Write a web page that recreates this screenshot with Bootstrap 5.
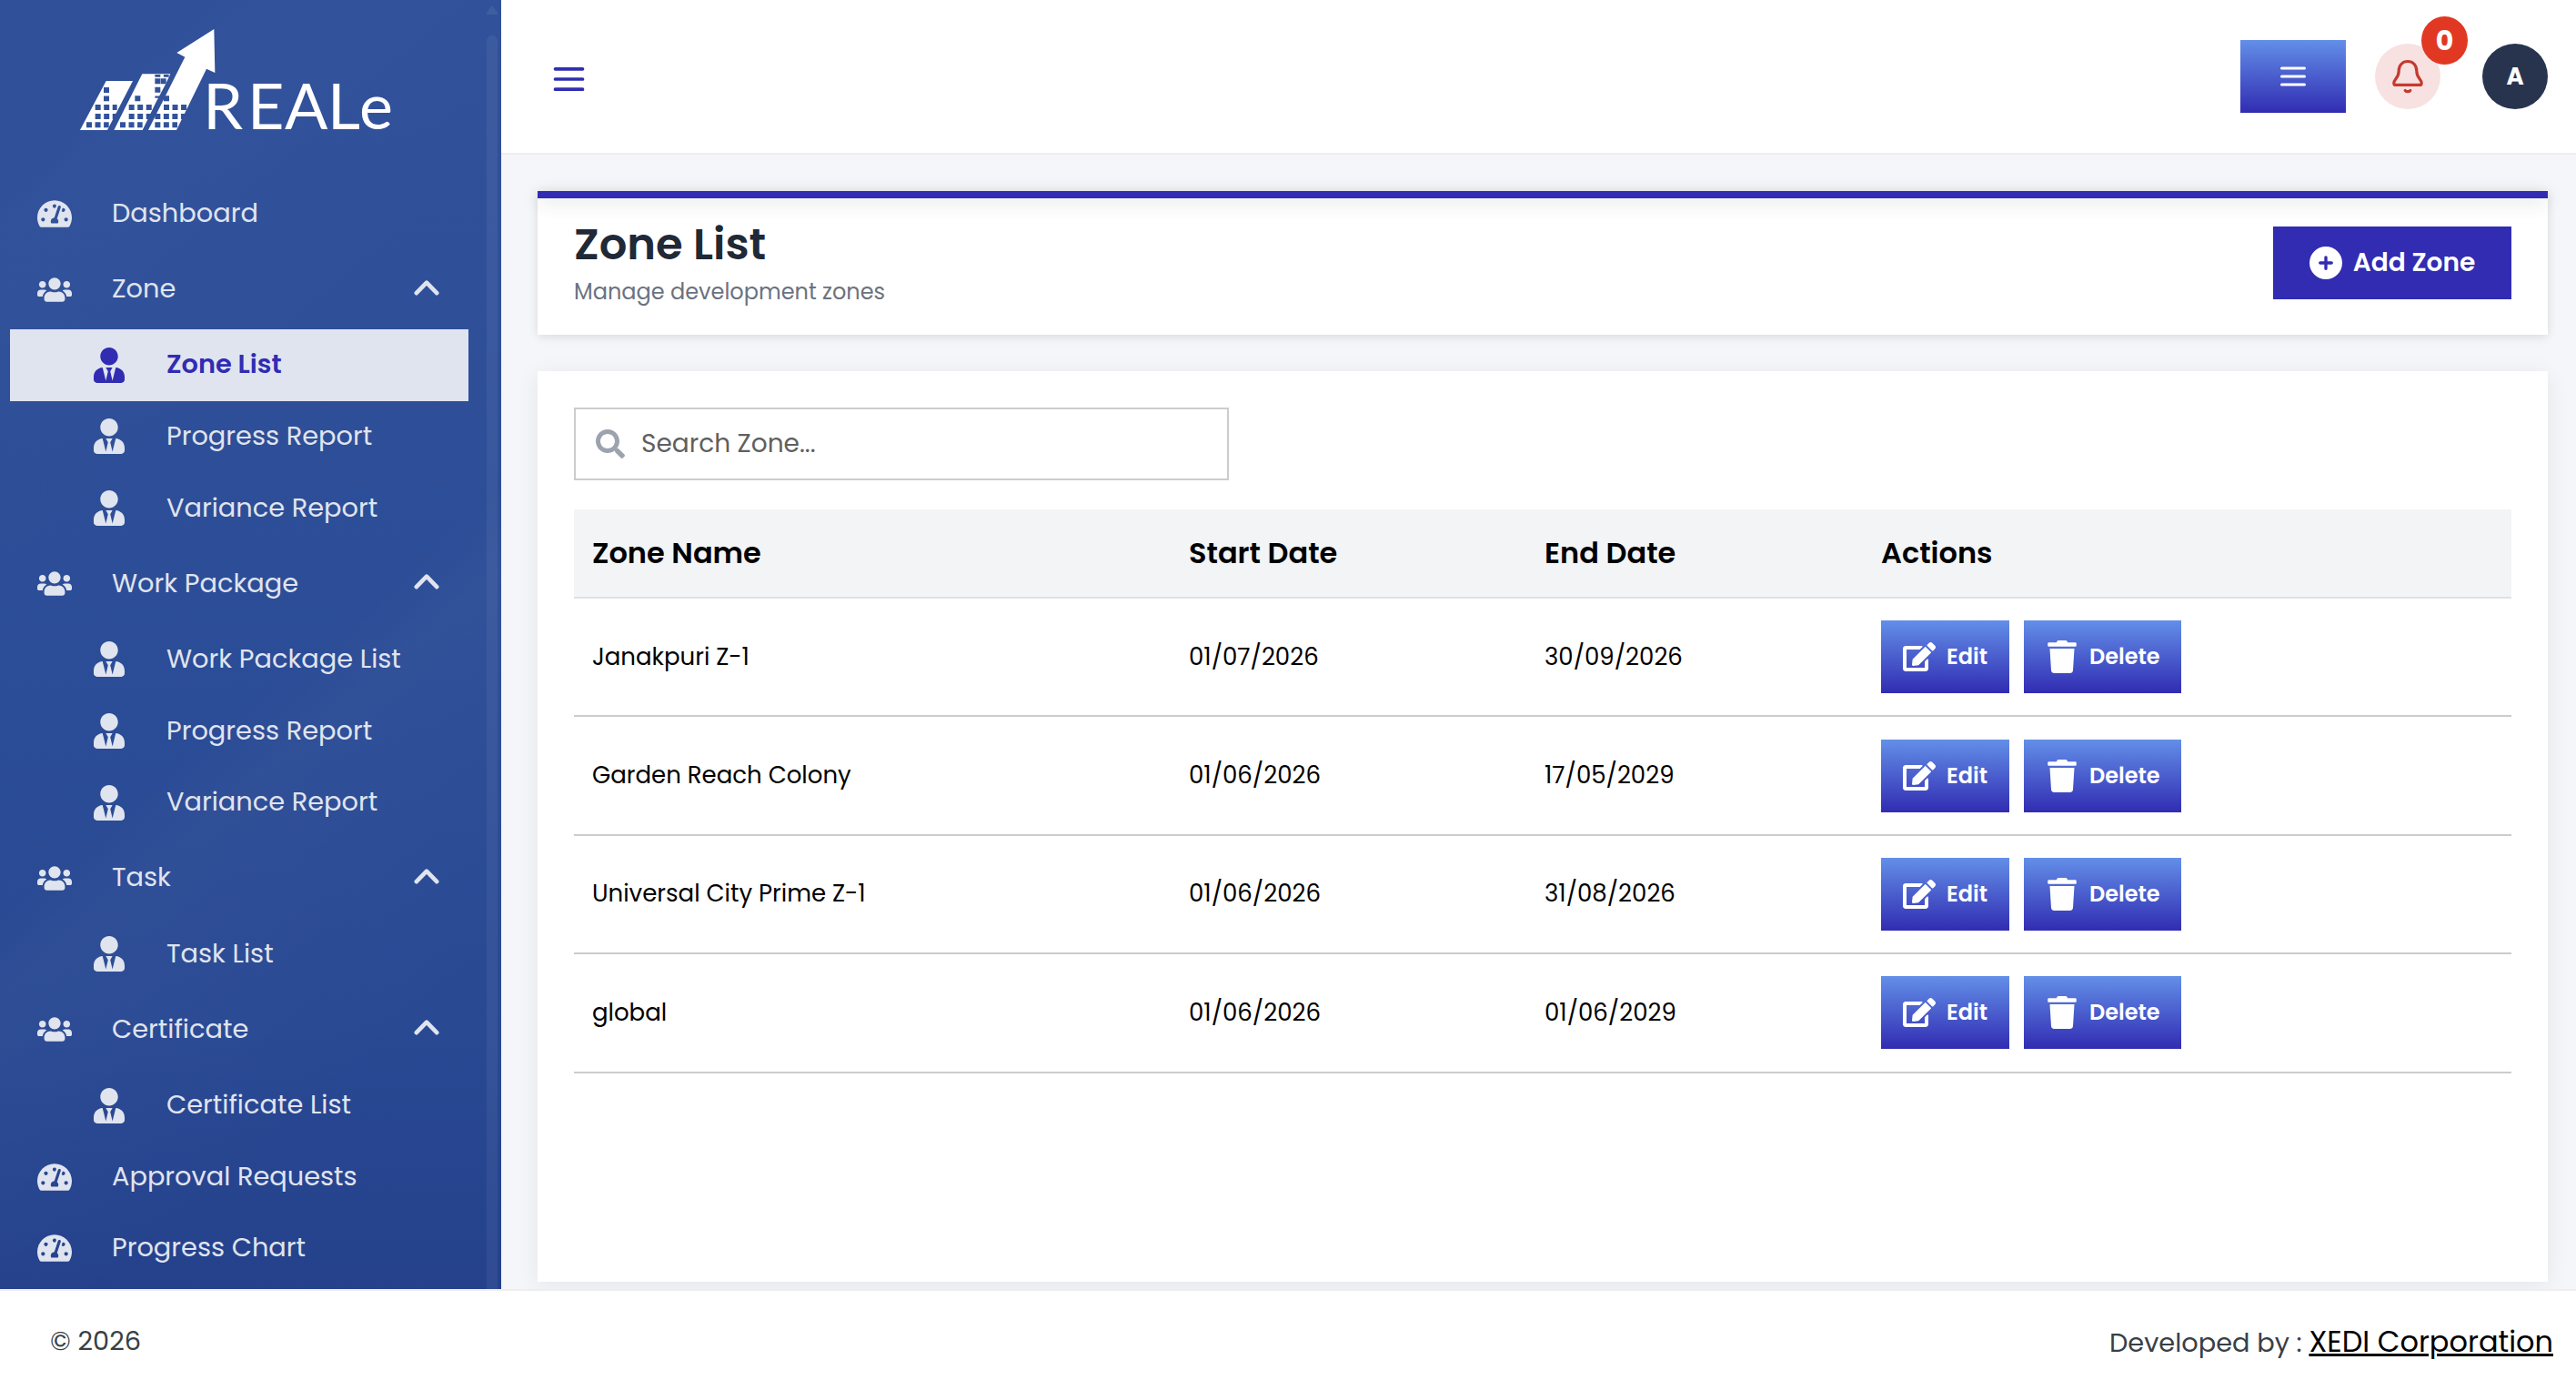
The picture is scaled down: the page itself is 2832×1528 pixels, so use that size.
<!DOCTYPE html>
<html lang="en">
<head>
    <meta charset="UTF-8">
    <meta name="viewport" content="width=device-width, initial-scale=1.0">
    <title>Zone List</title>
    <link rel="stylesheet" href="https://cdn.jsdelivr.net/npm/bootstrap@5.3.0/dist/css/bootstrap.min.css">
    <style>
        :root {
            --brand: #312cb2;
        }

        body {
            height: 1528px;
            font-family: "Poppins", "Inter", sans-serif;
            font-size: 28.8px;
            line-height: 1.5;
            background: #f5f6fa;
        }

        svg { display: block; flex: none; }

        /* sidebar */
        .side-panel {
            width: 551px;
            height: 1417px;
            color: #e0e4ef;
            background:
                linear-gradient(139.5deg, transparent 10%, rgba(255, 255, 255, .012) 14%, transparent 38%, transparent 53%, rgba(255, 255, 255, .025) 58%, transparent 82%),
                linear-gradient(180deg, #30519a 0%, #2f5099 25%, #2b4c96 55%, #294993 80%, #25418c 100%);
        }
        .side-logo { margin: 25px 0 41px 80px; overflow: visible; }
        .side-scroll { width: 12px; margin-right: 4px; padding-top: 6px; gap: 23px; }
        .side-thumb { background: rgba(255, 255, 255, .055); border-radius: 6px 6px 0 0; }
        .side-menu { width: 504px; margin-left: 11px; }
        .side-item { height: 78.7px; padding-left: 30px; color: inherit; text-decoration: none; }
        .side-item > svg { width: 38px; margin: -1px 44px 0 0; }
        .side-item > span { padding-bottom: 2px; }
        .side-head { height: 87.7px; }
        .side-head > .side-chevron { width: 28px; margin: -6px 32px 0 auto; }
        .side-sub { padding-left: 92px; }
        .side-sub > svg { width: 34px; margin-right: 46px; }
        .side-item.active { background: #e0e4ef; color: var(--brand); font-weight: 600; }

        /* top bar */
        .main-col { height: 1417px; }
        .top-bar { height: 170px; padding: 0 31px 0 57px; background: #fff; border-bottom: 2px solid #eee; }
        .top-toggle { margin-top: 6px; }
        .btn-fade {
            height: 80px;
            border: 0;
            border-radius: 0;
            color: #fff;
            background: linear-gradient(180deg, #638fe8, #312cb2);
        }
        .top-menu { width: 116px; }
        .round-box { width: 72px; height: 72px; }
        .bell-box { margin: 0 46px 0 32px; background: #f7e2e1; color: #c43a30; }
        .bell-count {
            left: 51px;
            top: -30px;
            width: 51px;
            height: 53px;
            background: #e13823;
            font-size: 30px;
            font-weight: 700;
        }
        .user-box { background: #28344e; font-size: 26px; font-weight: 700; }

        /* page content */
        .page-body { padding: 40px 31px 8px 40px; gap: 40px; }
        .title-card { height: 158px; background: #fff; box-shadow: 0 2px 10px rgba(0, 0, 0, .12); }
        .title-line { height: 8px; background: var(--brand); box-shadow: 0 4px 20px rgba(0, 50, 30, .16); }
        .title-row { padding: 0 40px; }
        .page-title { font-size: 48px; font-weight: 600; line-height: 60px; color: #1f2937; margin-top: 21px; }
        .page-note { font-size: 24px; line-height: 36px; color: #6b7280; margin-top: 4px; }
        .btn-add { width: 262px; height: 80px; margin-top: 31px; gap: 12px; border-radius: 0; background: var(--brand); color: #fff; font-size: 28px; font-weight: 600; }
        .list-card { padding: 40px; background: #fff; box-shadow: 0 4px 24px rgba(0, 0, 0, .07); }
        .search-box { width: 720px; height: 80px; padding-left: 22px; gap: 18px; border: 2px solid #ccc; color: #5f5f5f; font-size: 28px; }

        .zone-table { width: 2130px; margin-top: 32px; table-layout: fixed; border-collapse: separate; border-spacing: 0; color: #000; }
        .zone-table th { height: 98px; padding: 0 20px; background: #f2f4f6; border-bottom: 2px solid #dee2e6; font-size: 32px; font-weight: 600; vertical-align: middle; }
        .zone-table td { height: 130.4px; padding: 0 20px; border-bottom: 2px solid #ccc; font-size: 26px; vertical-align: middle; }
        .btn-row { font-size: 24px; font-weight: 600; gap: 12px; padding: 0 24px; }
        .btn-edit { width: 141px; }
        .btn-del { width: 173px; gap: 14px; padding-left: 26px; }

        .foot-bar { height: 111px; padding: 2px 25px 0 55px; background: #fff; border-top: 2px solid #eee; color: #3a3f45; }
        .foot-dev { padding-top: 1px; }
        .foot-link { font-size: 32px; color: #000; }
    </style>
</head>
<body class="overflow-hidden">
    <svg width="0" height="0" class="position-absolute">
        <symbol id="i-gauge" viewBox="0 32 576 448"><path fill="currentColor" d="M288 32C128.94 32 0 160.94 0 320c0 52.8 14.25 102.26 39.06 144.8 5.61 9.62 16.3 15.2 27.44 15.2h443c11.14 0 21.83-5.58 27.44-15.2C561.75 422.26 576 372.8 576 320c0-159.06-128.94-288-288-288zm0 64c14.71 0 26.58 10.13 30.32 23.65-1.11 2.26-2.64 4.23-3.45 6.67l-9.22 27.67c-5.13 3.49-10.97 6.01-17.64 6.01-17.67 0-32-14.33-32-32S270.33 96 288 96zM96 384c-17.67 0-32-14.33-32-32s14.33-32 32-32 32 14.33 32 32-14.33 32-32 32zm48-160c-17.67 0-32-14.33-32-32s14.33-32 32-32 32 14.33 32 32-14.33 32-32 32zm246.77-72.41l-61.33 184C343.13 347.33 352 364.54 352 384c0 11.72-3.38 22.55-8.88 32H232.88c-5.5-9.45-8.88-20.28-8.88-32 0-33.94 26.5-61.43 59.9-63.59l61.34-184.01c4.17-12.56 17.73-19.45 30.36-15.17 12.57 4.19 19.35 17.79 15.17 30.36zm14.66 57.2l15.52-46.55c3.47-1.29 7.13-2.23 11.05-2.23 17.67 0 32 14.33 32 32s-14.33 32-32 32c-11.38-.01-20.89-6.28-26.57-15.22zM480 384c-17.67 0-32-14.33-32-32s14.33-32 32-32 32 14.33 32 32-14.33 32-32 32z"/></symbol>
        <symbol id="i-users" viewBox="0 32 640 448"><path fill="currentColor" d="M96 224c35.3 0 64-28.7 64-64s-28.7-64-64-64-64 28.7-64 64 28.7 64 64 64zm448 0c35.3 0 64-28.7 64-64s-28.7-64-64-64-64 28.7-64 64 28.7 64 64 64zm32 32h-64c-17.6 0-33.5 7.1-45.1 18.6 40.3 22.1 68.9 62 75.1 109.4h66c17.7 0 32-14.3 32-32v-32c0-35.3-28.7-64-64-64zm-256 0c61.9 0 112-50.1 112-112S381.9 32 320 32 208 82.1 208 144s50.1 112 112 112zm76.8 32h-8.3c-20.8 10-43.9 16-68.5 16s-47.6-6-68.5-16h-8.3C179.6 288 128 339.6 128 403.2V432c0 26.5 21.5 48 48 48h288c26.5 0 48-21.5 48-48v-28.8c0-63.6-51.6-115.2-115.2-115.2zm-223.7-13.4C161.5 263.1 145.6 256 128 256H64c-35.3 0-64 28.7-64 64v32c0 17.7 14.3 32 32 32h65.9c6.3-47.4 34.9-87.3 75.2-109.4z"/></symbol>
        <symbol id="i-tie" viewBox="0 0 448 512"><path fill="currentColor" d="M224 256c70.7 0 128-57.3 128-128S294.7 0 224 0 96 57.3 96 128s57.3 128 128 128zm95.8 32.6L272 480l-32-136 32-56h-96l32 56-32 136-47.8-191.4C56.9 292 0 350.3 0 422.4V464c0 26.5 21.5 48 48 48h352c26.5 0 48-21.5 48-48v-41.6c0-72.1-56.9-130.4-128.2-133.8z"/></symbol>
        <symbol id="i-up" viewBox="0 0 28 18"><path fill="none" stroke="currentColor" stroke-width="4.6" stroke-linecap="round" stroke-linejoin="round" d="M2.8 15.2 14 3.6l11.2 11.6"/></symbol>
        <symbol id="i-edit" viewBox="0 0 576 512"><path fill="currentColor" d="M402.6 83.2l90.2 90.2c3.8 3.8 3.8 10 0 13.8L274.4 405.6l-92.8 10.3c-12.4 1.4-22.9-9.1-21.5-21.5l10.3-92.8L388.8 83.2c3.8-3.8 10-3.8 13.8 0zm162-22.9l-48.8-48.8c-15.2-15.2-39.9-15.2-55.2 0l-35.4 35.4c-3.8 3.8-3.8 10 0 13.8l90.2 90.2c3.8 3.8 10 3.8 13.8 0l35.4-35.4c15.2-15.3 15.2-40 0-55.2zM384 346.2V448H64V128h229.8c3.2 0 6.2-1.3 8.5-3.5l40-40c7.6-7.6 2.2-20.5-8.5-20.5H48C21.5 64 0 85.5 0 112v352c0 26.5 21.5 48 48 48h352c26.5 0 48-21.5 48-48V306.2c0-10.7-12.9-16-20.5-8.5l-40 40c-2.2 2.3-3.5 5.3-3.5 8.5z"/></symbol>
        <symbol id="i-trash" viewBox="0 0 448 512"><path fill="currentColor" d="M432 32H312l-9.4-18.7A24 24 0 0 0 281.1 0H166.8a23.72 23.72 0 0 0-21.4 13.3L136 32H16A16 16 0 0 0 0 48v32a16 16 0 0 0 16 16h416a16 16 0 0 0 16-16V48a16 16 0 0 0-16-16zM32 128l21.2 339a48 48 0 0 0 47.9 45h245.8a48 48 0 0 0 47.9-45L416 128z"/></symbol>
    </svg>

    <div class="d-flex">
        <!-- Sidebar -->
        <aside class="side-panel d-flex justify-content-between overflow-hidden flex-shrink-0">
            <div>
                <svg class="side-logo" width="360" height="130" viewBox="0 0 1080 390">
                    <mask id="windows">
                        <rect width="1080" height="390" fill="#fff"/>
                        <path stroke="#000" stroke-width="18" stroke-dasharray="18 10.6" d="M111 213v46M214 241v18M309 241v18M280 184v64"/>
                        <path stroke="#000" stroke-width="18" stroke-dasharray="18 10.6" d="M74 279h72M74 309h72M45 337h74M185 279h76M185 309h76M156 337h74M299 184v18M300 279h76M271 309h102M271 337h74"/>
                        <path stroke="#000" stroke-width="8" stroke-dasharray="18 10.6" d="M271 175h46"/>
                    </mask>
                    <g fill="#fff">
                        <g mask="url(#windows)">
                            <path d="M24 354 110 192h88l-84 162z"/>
                            <path d="M136 354 173 280 229 169h93l-17 36-31 58-44 91z"/>
                            <path d="M249 354 370 113l-27-14L466 21l3 144-28-13-99 202z"/>
                        </g>
                        <text x="430 576 699 840 945" y="350" font-family="Lato, sans-serif" font-size="210">REALe</text>
                    </g>
                </svg>
                <nav class="side-menu d-flex flex-column">
                    <a class="side-item d-flex align-items-center"><svg height="30"><use href="#i-gauge"/></svg><span>Dashboard</span></a>
                    <a class="side-item side-head d-flex align-items-center"><svg height="27"><use href="#i-users"/></svg><span>Zone</span><svg class="side-chevron" height="18"><use href="#i-up"/></svg></a>
                    <a class="side-item side-sub active d-flex align-items-center"><svg height="39"><use href="#i-tie"/></svg><span>Zone List</span></a>
                    <a class="side-item side-sub d-flex align-items-center"><svg height="39"><use href="#i-tie"/></svg><span>Progress Report</span></a>
                    <a class="side-item side-sub d-flex align-items-center"><svg height="39"><use href="#i-tie"/></svg><span>Variance Report</span></a>
                    <a class="side-item side-head d-flex align-items-center"><svg height="27"><use href="#i-users"/></svg><span>Work Package</span><svg class="side-chevron" height="18"><use href="#i-up"/></svg></a>
                    <a class="side-item side-sub d-flex align-items-center"><svg height="39"><use href="#i-tie"/></svg><span>Work Package List</span></a>
                    <a class="side-item side-sub d-flex align-items-center"><svg height="39"><use href="#i-tie"/></svg><span>Progress Report</span></a>
                    <a class="side-item side-sub d-flex align-items-center"><svg height="39"><use href="#i-tie"/></svg><span>Variance Report</span></a>
                    <a class="side-item side-head d-flex align-items-center"><svg height="27"><use href="#i-users"/></svg><span>Task</span><svg class="side-chevron" height="18"><use href="#i-up"/></svg></a>
                    <a class="side-item side-sub d-flex align-items-center"><svg height="39"><use href="#i-tie"/></svg><span>Task List</span></a>
                    <a class="side-item side-head d-flex align-items-center"><svg height="27"><use href="#i-users"/></svg><span>Certificate</span><svg class="side-chevron" height="18"><use href="#i-up"/></svg></a>
                    <a class="side-item side-sub d-flex align-items-center"><svg height="39"><use href="#i-tie"/></svg><span>Certificate List</span></a>
                    <a class="side-item d-flex align-items-center"><svg height="30"><use href="#i-gauge"/></svg><span>Approval Requests</span></a>
                    <a class="side-item d-flex align-items-center"><svg height="30"><use href="#i-gauge"/></svg><span>Progress Chart</span></a>
                </nav>
            </div>
            <div class="side-scroll d-flex flex-column">
                <svg width="12" height="10"><path fill="#fff" fill-opacity=".07" d="M6 0l6 8v2H0V8z"/></svg>
                <div class="side-thumb flex-grow-1"></div>
            </div>
        </aside>

        <div class="main-col d-flex flex-column flex-grow-1 overflow-hidden">
            <!-- Top bar -->
            <header class="top-bar d-flex align-items-center flex-shrink-0">
                <svg class="top-toggle me-auto" width="36" height="34"><path stroke="#312cb2" stroke-width="3.7" stroke-linecap="round" d="M2.5 5.8h30M2.5 17h30M2.5 28.2h30"/></svg>
                <button class="btn btn-fade top-menu d-flex align-items-center justify-content-center p-0">
                    <svg width="28" height="24"><path stroke="currentColor" stroke-width="3" stroke-linecap="round" d="M1.5 3h25M1.5 12h25M1.5 21h25"/></svg>
                </button>
                <div class="round-box bell-box rounded-circle position-relative d-flex align-items-center justify-content-center">
                    <svg width="36" height="40" fill="none" stroke="currentColor" stroke-width="3.2" stroke-linecap="round" stroke-linejoin="round"><path d="M18 3.5c-6 0-9.8 4.4-9.8 10.5 0 8-5.4 9-5.4 13.4 0 1.3.8 2 2 2h26.400c1.2 0 2-.7 2-2 0-4.400-5.400-5.400-5.400-13.400C27.800 7.900 24 3.500 18 3.500zM15.200 35.400c1.400 1.700 4.200 1.700 5.600 0"/></svg>
                    <span class="bell-count position-absolute rounded-circle text-white d-flex align-items-center justify-content-center">0</span>
                </div>
                <div class="round-box user-box rounded-circle text-white d-flex align-items-center justify-content-center">A</div>
            </header>

            <main class="page-body d-flex flex-column flex-grow-1">
                <section class="title-card flex-shrink-0">
                    <div class="title-line"></div>
                    <div class="title-row d-flex justify-content-between">
                        <div>
                            <h1 class="page-title mb-0">Zone List</h1>
                            <p class="page-note mb-0">Manage development zones</p>
                        </div>
                        <button class="btn btn-add d-flex align-items-center justify-content-center p-0">
                            <svg width="36" height="36" viewBox="0 0 512 512"><path fill="currentColor" d="M256 512A256 256 0 1 0 256 0a256 256 0 1 0 0 512zM232 344V280H168c-13.3 0-24-10.7-24-24s10.7-24 24-24h64V168c0-13.3 10.7-24 24-24s24 10.7 24 24v64h64c13.3 0 24 10.7 24 24s-10.7 24-24 24H280v64c0 13.3-10.7 24-24 24s-24-10.7-24-24z"/></svg>
                            <span>Add Zone</span>
                        </button>
                    </div>
                </section>

                <section class="list-card flex-grow-1">
                    <div class="search-box d-flex align-items-center">
                        <svg width="32" height="32" viewBox="0 0 512 512"><path fill="#9ca3af" d="M505 442.7L405.3 343c-4.5-4.5-10.6-7-17-7H372c27.6-35.3 44-79.7 44-128C416 93.1 322.9 0 208 0S0 93.1 0 208s93.1 208 208 208c48.3 0 92.7-16.4 128-44v16.3c0 6.4 2.5 12.5 7 17l99.7 99.7c9.4 9.4 24.6 9.4 33.9 0l28.3-28.3c9.4-9.4 9.4-24.6.1-34zM208 336c-70.7 0-128-57.2-128-128 0-70.7 57.2-128 128-128 70.7 0 128 57.2 128 128 0 70.7-57.2 128-128 128z"/></svg>
                        <span>Search Zone...</span>
                    </div>
                    <table class="zone-table">
                        <colgroup><col width="656"><col width="391"><col width="370"><col></colgroup>
                        <thead>
                            <tr><th>Zone Name</th><th>Start Date</th><th>End Date</th><th>Actions</th></tr>
                        </thead>
                        <tbody id="zoneRows"></tbody>
                    </table>
                </section>
            </main>
        </div>
    </div>

    <footer class="foot-bar d-flex align-items-center justify-content-between">
        <span>&copy; 2026</span>
        <span class="foot-dev">Developed by : <a class="foot-link" href="#">XEDI Corporation</a></span>
    </footer>

    <script src="https://cdn.jsdelivr.net/npm/bootstrap@5.3.0/dist/js/bootstrap.bundle.min.js"></script>
    <script>
        const zones = [
            ['Janakpuri Z-1', '01/07/2026', '30/09/2026'],
            ['Garden Reach Colony', '01/06/2026', '17/05/2029'],
            ['Universal City Prime Z-1', '01/06/2026', '31/08/2026'],
            ['global', '01/06/2026', '01/06/2029']
        ];

        document.getElementById('zoneRows').innerHTML = zones.map(([name, start, end]) => `
            <tr>
                <td>${name}</td>
                <td>${start}</td>
                <td>${end}</td>
                <td>
                    <div class="d-flex gap-3">
                        <button class="btn btn-fade btn-row btn-edit d-flex align-items-center"><svg width="36" height="32"><use href="#i-edit"/></svg><span>Edit</span></button>
                        <button class="btn btn-fade btn-row btn-del d-flex align-items-center"><svg width="32" height="36"><use href="#i-trash"/></svg><span>Delete</span></button>
                    </div>
                </td>
            </tr>`).join('');
    </script>
</body>
</html>
